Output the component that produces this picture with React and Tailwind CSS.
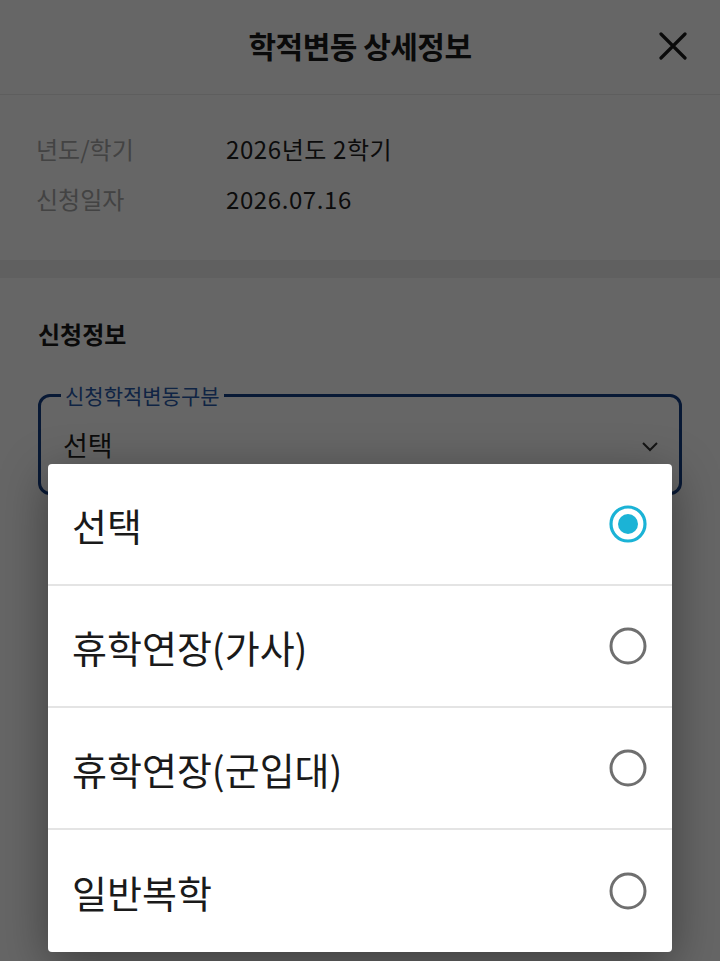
import React from "react";

const font = { fontFamily: '"Noto Sans CJK KR", "Noto Sans", sans-serif' };

function Radio({ selected }) {
  return (
    <svg width="40" height="40" viewBox="0 0 40 40">
      {selected ? (
        <>
          <circle cx="20" cy="20" r="17" fill="none" stroke="#1bb3d6" strokeWidth="3.2" />
          <circle cx="20" cy="20" r="10" fill="#1bb3d6" />
        </>
      ) : (
        <circle cx="20" cy="20" r="17" fill="none" stroke="#6f6f6f" strokeWidth="3" />
      )}
    </svg>
  );
}

export default function App() {
  const options = ["선택", "휴학연장(가사)", "휴학연장(군입대)", "일반복학"];
  return (
    <div className="relative w-[720px] h-[961px] overflow-hidden bg-white" style={font}>
      {/* Header */}
      <div className="relative h-[95px] flex items-center justify-center border-b border-[#ececec]">
        <h1 className="text-[30px] leading-[40px] mt-[-4px] font-bold text-[#1a1a1a] tracking-[-0.5px]">학적변동 상세정보</h1>
        <button className="absolute right-[32px] top-[31px] w-[30px] h-[30px] flex items-center justify-center">
          <svg width="28" height="28" viewBox="0 0 28 28">
            <path d="M2 2 L26 26 M26 2 L2 26" stroke="#1a1a1a" strokeWidth="3.2" strokeLinecap="round" />
          </svg>
        </button>
      </div>

      {/* Info */}
      <div className="px-9 pt-[29px] pb-[36px] flex flex-col">
        <div className="h-[50px] flex items-center text-[24px]">
          <span className="w-[190px] text-[#a8a8a8]">년도/학기</span>
          <span className="text-[#1e1e1e] tracking-[0.6px]">2026년도 2학기</span>
        </div>
        <div className="h-[50px] flex items-center text-[24px]">
          <span className="w-[190px] text-[#a8a8a8]">신청일자</span>
          <span className="text-[#1e1e1e] tracking-[0.6px]">2026.07.16</span>
        </div>
      </div>

      <div className="h-[18px] bg-[#eff0f0]" />

      {/* Form */}
      <div className="px-[38px] pt-[40px]">
        <h2 className="text-[24px] leading-[32px] font-bold text-[#1a1a1a]">신청정보</h2>
        <fieldset className="mt-[31px] border-[3px] border-[#163f86] rounded-[12px] px-[22px] pb-[12px] h-[114px]">
          <legend className="px-[4px] ml-[-2px] text-[21px] leading-[28px] text-[#2a5bab]">신청학적변동구분</legend>
          <div className="flex items-center justify-between pt-[18px]">
            <span className="text-[27px] leading-[36px] text-[#1e1e1e]">선택</span>
            <svg width="18" height="12" viewBox="0 0 18 12" className="mr-[-2px] mt-[4px]">
              <path d="M2 2 L9 9 L16 2" fill="none" stroke="#333" strokeWidth="2" />
            </svg>
          </div>
        </fieldset>
      </div>

      {/* Dim overlay */}
      <div className="absolute inset-0 bg-black/60" />

      {/* Dropdown */}
      <div className="absolute left-[48px] top-[464px] w-[624px] bg-white rounded-[4px] shadow-[0_12px_48px_rgba(0,0,0,0.4)] overflow-hidden">
        {options.map((o, i) => (
          <div
            key={o}
            className={
              "h-[122px] flex items-center justify-between pl-[24px] pr-[24px] " +
              (i < options.length - 1 ? "border-b-2 border-[#e4e4e4]" : "")
            }
          >
            <span className="text-[38px] text-[#1a1a1a]">{o}</span>
            <Radio selected={i === 0} />
          </div>
        ))}
      </div>
    </div>
  );
}
